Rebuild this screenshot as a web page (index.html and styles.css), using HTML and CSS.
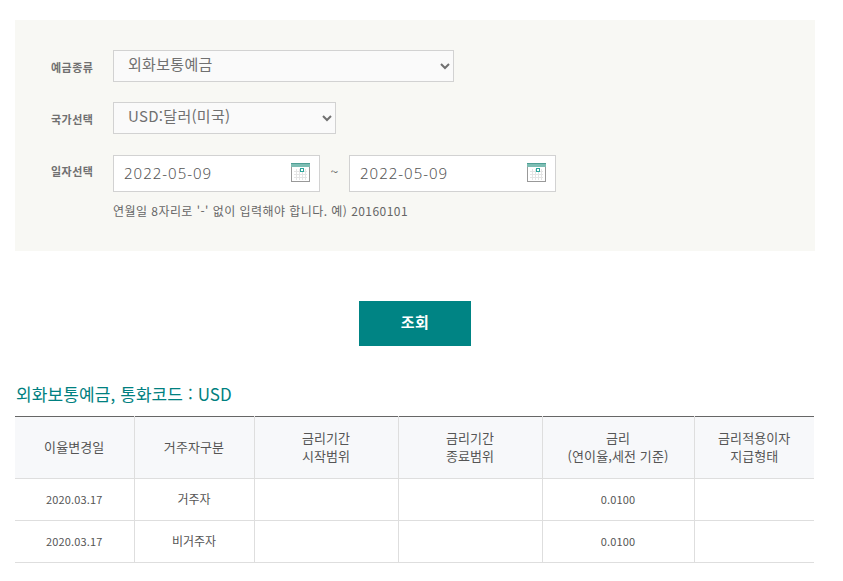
FILE: index.html
```html
<!DOCTYPE html>
<html lang="ko">
<head>
<meta charset="utf-8">
<title>외화보통예금</title>
<link rel="stylesheet" href="styles.css">
</head>
<body>
<main class="page">
  <form class="panel">
    <div class="row row-first">
      <label class="label">예금종류</label>
      <select class="select select-wide"><option>외화보통예금</option></select>
    </div>
    <div class="row row-second">
      <label class="label">국가선택</label>
      <select class="select select-narrow"><option>USD:달러(미국)</option></select>
    </div>
    <div class="row row-date">
      <label class="label label-date">일자선택</label>
      <div class="dates">
        <div class="date">
          <span class="date-value">2022-05-09</span>
          <svg class="cal" width="19" height="19" viewBox="0 0 19 19"><rect x="0.5" y="0.5" width="18" height="18" fill="#fff" stroke="#999"/><rect x="0" y="0" width="19" height="4" fill="#7dbdb3"/><rect x="0" y="0" width="19" height="1" fill="#4f9f95"/><path d="M3 8.5H16M3 11.5H16M3 14.5H16M5.5 6V17M8.5 6V17M11.5 6V17M14.5 6V17" stroke="#e4e4e4" fill="none"/><rect x="9.5" y="5.5" width="3" height="3" fill="#fff" stroke="#2ba59b"/></svg>
        </div>
        <span class="tilde">~</span>
        <div class="date">
          <span class="date-value">2022-05-09</span>
          <svg class="cal" width="19" height="19" viewBox="0 0 19 19"><rect x="0.5" y="0.5" width="18" height="18" fill="#fff" stroke="#999"/><rect x="0" y="0" width="19" height="4" fill="#7dbdb3"/><rect x="0" y="0" width="19" height="1" fill="#4f9f95"/><path d="M3 8.5H16M3 11.5H16M3 14.5H16M5.5 6V17M8.5 6V17M11.5 6V17M14.5 6V17" stroke="#e4e4e4" fill="none"/><rect x="9.5" y="5.5" width="3" height="3" fill="#fff" stroke="#2ba59b"/></svg>
        </div>
      </div>
    </div>
    <p class="hint">연월일 8자리로 '-' 없이 입력해야 합니다. 예) 20160101</p>
  </form>

  <div class="actions"><button type="button" class="btn">조회</button></div>

  <h2 class="title">외화보통예금, 통화코드 : USD</h2>

  <table class="rates">
    <colgroup>
      <col class="c1"><col class="c2"><col class="c3"><col class="c4"><col class="c5"><col class="c6">
    </colgroup>
    <thead>
      <tr>
        <th>이율변경일</th>
        <th>거주자구분</th>
        <th>금리기간<br>시작범위</th>
        <th>금리기간<br>종료범위</th>
        <th>금리<br>(연이율,세전 기준)</th>
        <th>금리적용이자<br>지급형태</th>
      </tr>
    </thead>
    <tbody>
      <tr><td class="num">2020.03.17</td><td>거주자</td><td></td><td></td><td class="num">0.0100</td><td></td></tr>
      <tr><td class="num">2020.03.17</td><td>비거주자</td><td></td><td></td><td class="num">0.0100</td><td></td></tr>
    </tbody>
  </table>
</main>
</body>
</html>
```

FILE: styles.css
```css
* { box-sizing: border-box; }
html, body { margin: 0; background: #fff; }
body {
  font-family: "Noto Sans CJK KR", "Noto Sans", sans-serif;
  color: #555;
  overflow: hidden;
}
.page { width: 800px; margin-left: 15px; padding-top: 20px; }
.panel {
  height: 231px;
  background: #f8f8f4;
  padding: 30px 0 0 36px;
}
.row { display: flex; align-items: center; }
.row-second { margin-top: 20px; }
.row-date { margin-top: 21px; align-items: flex-start; }
.label {
  width: 62px;
  font-size: 11px;
  font-weight: 700;
  letter-spacing: 0.5px;
  color: #707070;
  line-height: 16px;
  position: relative;
  top: 1px;
}
.label-date { top: 8px; }
.select {
  height: 32px;
  border: 1px solid #d2d2d2;
  border-radius: 0;
  background-color: #fafafa;
  font-family: inherit;
  font-size: 15px;
  color: #707070;
  padding: 0 10px 5px;
  letter-spacing: 0.3px;
}
.select-wide { width: 341px; }
.select-narrow { width: 223px; }
.dates { display: flex; align-items: center; }
.date {
  width: 207px;
  height: 37px;
  border: 1px solid #d2d2d2;
  background: #fff;
  display: flex;
  align-items: center;
  justify-content: space-between;
  padding: 0 9px 2px 10px;
}
.date-value {
  font-family: "Noto Sans", sans-serif;
  font-size: 15px;
  font-weight: 300;
  color: #555;
  letter-spacing: 1px;
}
.cal { display: block; }
.tilde { width: 29px; text-align: center; font-size: 14px; line-height: 30px; padding-bottom: 6px; color: #666; }
.hint {
  margin: 11px 0 0 62px;
  font-size: 12px;
  letter-spacing: 0.45px;
  line-height: 16px;
  color: #666;
}
.actions { display: flex; justify-content: center; margin-top: 50px; }
.btn {
  width: 112px;
  height: 45px;
  border: 0;
  background: #008484;
  color: #fff;
  font-family: inherit;
  font-size: 15px;
  font-weight: 700;
  letter-spacing: 0.5px;
  padding: 0 0 4px;
}
.title {
  margin: 38px 0 0;
  height: 22px;
  font-size: 17px;
  letter-spacing: 0.1px;
  line-height: 20px;
  font-weight: 400;
  color: #008080;
  padding-left: 1px;
}
.rates {
  margin-top: 10px;
  width: 799px;
  table-layout: fixed;
  border-collapse: collapse;
  border-top: 1px solid #666;
  font-size: 12px;
}
.c1 { width: 119px; }
.c2 { width: 120px; }
.c3 { width: 144px; }
.c4 { width: 144px; }
.c5 { width: 152px; }
.c6 { width: 120px; }
.rates th {
  height: 62px;
  background: #f7f8fa;
  font-weight: 400;
  font-size: 13px;
  letter-spacing: 0.1px;
  line-height: 18px;
  color: #555;
  text-align: center;
  padding: 0 0 2px;
  border-left: 1px solid #dedede;
  border-bottom: 1px solid #dedede;
}
.rates td {
  height: 42px;
  text-align: center;
  padding: 0 0 2px;
  color: #555;
  border-left: 1px solid #dedede;
  border-bottom: 1px solid #dedede;
}
.rates td.num { font-size: 11px; letter-spacing: 0.15px; }
.rates th:first-child, .rates td:first-child { border-left: 0; }
```
